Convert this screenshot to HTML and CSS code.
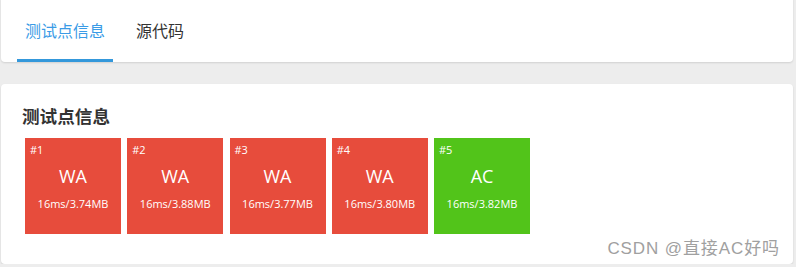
FILE: index.html
```html
<!DOCTYPE html>
<html lang="zh">
<head>
<meta charset="utf-8">
<link rel="stylesheet" href="styles.css">
</head>
<body>
<div class="page">
  <div class="card tabs-card">
    <div class="tabs">
      <div class="tab active">测试点信息</div>
      <div class="tab">源代码</div>
    </div>
  </div>
  <div class="card info-card">
    <h2 class="title">测试点信息</h2>
    <div class="cases">
      <div class="case wa"><span class="num">#1</span><span class="res">WA</span><span class="meta">16ms/3.74MB</span></div>
      <div class="case wa"><span class="num">#2</span><span class="res">WA</span><span class="meta">16ms/3.88MB</span></div>
      <div class="case wa"><span class="num">#3</span><span class="res">WA</span><span class="meta">16ms/3.77MB</span></div>
      <div class="case wa"><span class="num">#4</span><span class="res">WA</span><span class="meta">16ms/3.80MB</span></div>
      <div class="case ac"><span class="num">#5</span><span class="res">AC</span><span class="meta">16ms/3.82MB</span></div>
    </div>
    <div class="watermark">CSDN @直接AC好吗</div>
  </div>
</div>
</body>
</html>
```
FILE: styles.css
```css
html, body {
  margin: 0;
  padding: 0;
  background: #ededed;
  font-family: "Open Sans", "Noto Sans CJK SC", sans-serif;
  overflow: hidden;
}
.page {
  padding: 0 3px 0 1px;
}
.card {
  background: #fff;
  border-radius: 4px;
  box-shadow: 0 1px 2px rgba(0,0,0,0.12);
}
.tabs-card {
  margin-top: -4px;
  height: 66px;
}
.tabs {
  display: flex;
  gap: 15px;
  padding-left: 16px;
  height: 66px;
}
.tab {
  box-sizing: border-box;
  height: 66px;
  padding: 19px 8px 0;
  font-family: "Noto Sans CJK SC", sans-serif;
  font-size: 16px;
  line-height: 30px;
  color: #333;
  border-bottom: 3px solid transparent;
}
.tab.active {
  color: #3a9be6;
  border-bottom-color: #3498db;
}
.info-card {
  position: relative;
  margin-top: 22px;
  height: 180px;
  padding: 0 0 0 21px;
  box-sizing: border-box;
}
.title {
  margin: 0;
  padding-top: 19px;
  font-family: "Noto Sans CJK SC", sans-serif;
  font-size: 17.6px;
  font-weight: bold;
  line-height: 26px;
  color: #333;
}
.cases {
  display: flex;
  gap: 6.25px;
  margin-top: 9px;
  padding-left: 3px;
}
.case {
  width: 96px;
  height: 96px;
  flex: none;
  color: #fff;
  display: flex;
  flex-direction: column;
  align-items: center;
  box-sizing: border-box;
  padding-top: 4px;
}
.case.wa { background: #e74c3c; }
.case.ac { background: #52c41a; }
.num {
  align-self: flex-start;
  padding-left: 5px;
  font-size: 11px;
  line-height: 16px;
}
.res {
  font-size: 18px;
  line-height: 24px;
  margin-top: 6px;
}
.meta {
  font-size: 11px;
  line-height: 16px;
  margin-top: 8px;
}
.watermark {
  position: absolute;
  right: 13px;
  bottom: 5px;
  font-family: "Liberation Sans", "Noto Sans CJK SC", sans-serif;
  font-size: 17px;
  letter-spacing: 0.9px;
  color: #a0a0a0;
}
```
